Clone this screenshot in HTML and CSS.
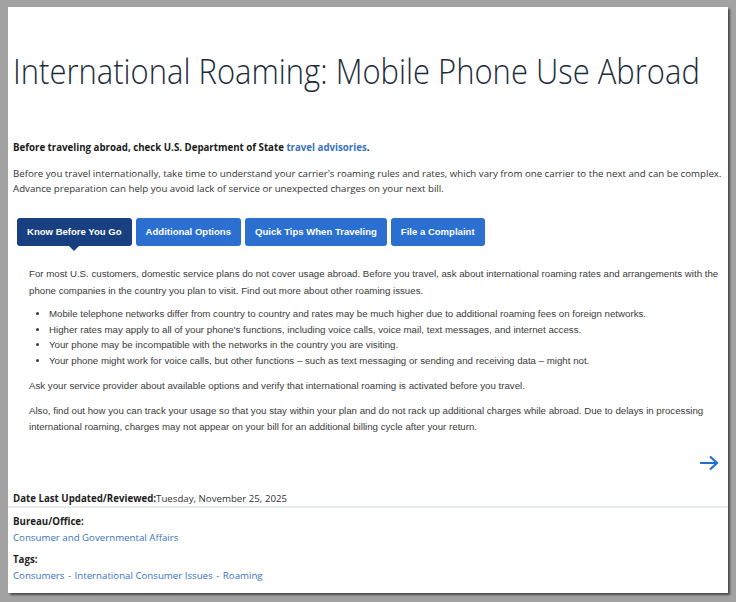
FILE: index.html
```html
<!DOCTYPE html>
<html lang="en">
<head>
<meta charset="utf-8">
<title>International Roaming: Mobile Phone Use Abroad</title>
<link rel="stylesheet" href="styles.css">
</head>
<body>
<div class="card">
  <div class="main">
    <h1 class="title"><span class="title-text">International Roaming: Mobile Phone Use Abroad</span></h1>
    <p class="lead">Before traveling abroad, check U.S. Department of State <a href="#">travel advisories</a>.</p>
    <p class="intro">Before you travel internationally, take time to understand your carrier's roaming rules and rates, which vary from one carrier to the next and can be complex. Advance preparation can help you avoid lack of service or unexpected charges on your next bill.</p>
    <div class="tabs">
      <span class="tab active">Know Before You Go</span>
      <span class="tab">Additional Options</span>
      <span class="tab">Quick Tips When Traveling</span>
      <span class="tab">File a Complaint</span>
    </div>
    <div class="panel">
      <p class="p1">For most U.S. customers, domestic service plans do not cover usage abroad. Before you travel, ask about international roaming rates and arrangements with the phone companies in the country you plan to visit. Find out more about other roaming issues.</p>
      <ul class="list">
        <li>Mobile telephone networks differ from country to country and rates may be much higher due to additional roaming fees on foreign networks.</li>
        <li>Higher rates may apply to all of your phone's functions, including voice calls, voice mail, text messages, and internet access.</li>
        <li>Your phone may be incompatible with the networks in the country you are visiting.</li>
        <li>Your phone might work for voice calls, but other functions – such as text messaging or sending and receiving data – might not.</li>
      </ul>
      <p class="p2">Ask your service provider about available options and verify that international roaming is activated before you travel.</p>
      <p class="p3">Also, find out how you can track your usage so that you stay within your plan and do not rack up additional charges while abroad. Due to delays in processing international roaming, charges may not appear on your bill for an additional billing cycle after your return.</p>
    </div>
    <div class="next">
      <svg class="arrow" width="20" height="16" viewBox="0 0 20 16"><path d="M1 8H18M11 1.5L18 8L11 14.5" fill="none" stroke="#1f6fcc" stroke-width="2.2"/></svg>
    </div>
    <div class="updated"><span class="label">Date Last Updated/Reviewed:</span>Tuesday, November 25, 2025</div>
  </div>
  <div class="meta">
    <div class="label">Bureau/Office:</div>
    <div class="links"><a href="#">Consumer and Governmental Affairs</a></div>
    <div class="label tags">Tags:</div>
    <div class="links"><a href="#">Consumers</a> - <a href="#">International Consumer Issues</a> - <a href="#">Roaming</a></div>
  </div>
</div>
</body>
</html>
```
FILE: styles.css
```css
html, body {
  margin: 0;
  padding: 0;
}
body {
  background: #a2a2a2;
  width: 736px;
  height: 602px;
  overflow: hidden;
  font-family: "Open Sans", "Liberation Sans", sans-serif;
}
.card {
  margin: 7px 0 0 8px;
  width: 720px;
  height: 586px;
  background: #ffffff;
  box-shadow: 2px 2px 2px #4a4a4a;
  overflow: hidden;
}
.main {
  padding: 0 6px 0 5px;
}
.title {
  margin: 0;
  padding-top: 42px;
  font-size: 35px;
  font-weight: 300;
  line-height: 44px;
  color: #1c2b3c;
  white-space: nowrap;
}
.title-text {
  display: inline-block;
  transform: scaleX(0.885);
  transform-origin: 0 50%;
}
.lead {
  margin: 47px 0 0 0;
  font-size: 9.7px;
  font-weight: 700;
  line-height: 15px;
  color: #1b1b1b;
}
a {
  color: #3a72c2;
  text-decoration: none;
}
.intro {
  margin: 11px 0 0 0;
  font-size: 9.7px;
  line-height: 15px;
  color: #333;
}
.tabs {
  display: flex;
  gap: 4px;
  margin: 22px 0 0 4px;
}
.tab {
  position: relative;
  height: 28px;
  line-height: 28px;
  padding: 0 10px;
  border-radius: 3px;
  background: #2b6fd1;
  color: #fff;
  font-family: "Liberation Sans", Arial, sans-serif;
  font-weight: 700;
  font-size: 9.55px;
}
.tab.active {
  background: #183f80;
}
.tab.active::after {
  content: "";
  position: absolute;
  left: 50%;
  bottom: -5px;
  margin-left: -5px;
  border-left: 5px solid transparent;
  border-right: 5px solid transparent;
  border-top: 5px solid #183f80;
}
.panel {
  padding: 0 0 0 16px;
  font-family: "Liberation Sans", Arial, sans-serif;
  font-size: 9.7px;
  color: #3a3a3a;
}
.panel p {
  margin: 0;
}
.p1 {
  margin-top: 19px !important;
  line-height: 17px;
}
.list {
  margin: 7px 0 0 0;
  padding-left: 20px;
  line-height: 15.5px;
}
.p2 {
  margin-top: 9px !important;
  line-height: 17px;
}
.p3 {
  margin-top: 9px !important;
  line-height: 16px;
}
.next {
  display: flex;
  justify-content: flex-end;
  padding: 20px 3px 0 0;
}
.updated {
  margin-top: 20px;
  font-size: 9.7px;
  line-height: 15px;
  color: #333;
}
.updated .label {
  font-weight: 700;
  color: #1e1e1e;
}
.meta {
  margin-top: 0;
  border-top: 2px solid #e9edf2;
  padding: 6px 5px 0 5px;
  font-size: 9.7px;
  line-height: 15px;
}
.meta .label {
  font-weight: 700;
  color: #1e1e1e;
}
.meta .links {
  margin-top: 1px;
  color: #3a72c2;
}
.meta .links a {
  margin: 0 1px;
}
.meta .links a:first-child {
  margin-left: 0;
}
.meta .tags {
  margin-top: 7px;
}
```
